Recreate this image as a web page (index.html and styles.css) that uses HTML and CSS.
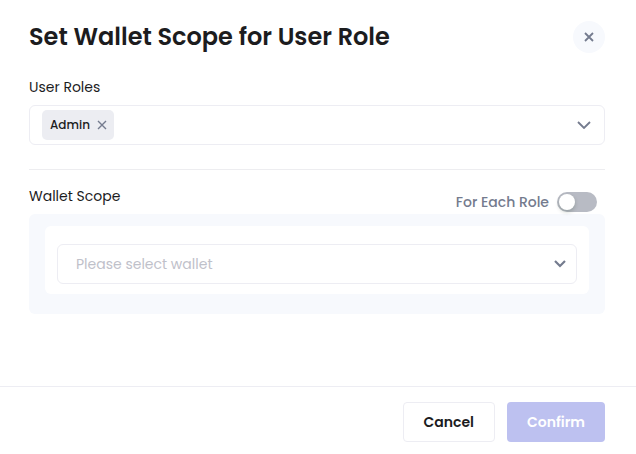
FILE: index.html
```html
<!DOCTYPE html>
<html lang="en">
<head>
<meta charset="utf-8">
<meta name="viewport" content="width=device-width, initial-scale=1">
<title>Set Wallet Scope for User Role</title>
<link rel="stylesheet" href="styles.css">
</head>
<body>
<form class="dialog" role="dialog" aria-labelledby="dialog-title">
  <header class="dialog-header">
    <h1 class="dialog-title" id="dialog-title">Set Wallet Scope for User Role</h1>
    <button class="close" type="button" aria-label="Close">
      <svg width="10" height="10" viewBox="0 0 10 10"><path d="M1 1L9 9M9 1L1 9" fill="none" stroke="currentColor" stroke-width="1.8"/></svg>
    </button>
  </header>

  <main class="dialog-body">
    <label class="label" for="roles">User Roles</label>
    <div class="roles-box">
      <span class="chip">Admin
        <button class="chip-remove" type="button" aria-label="Remove Admin">
          <svg width="10" height="10" viewBox="0 0 10 10"><path d="M1 1L9 9M9 1L1 9" fill="none" stroke="currentColor" stroke-width="1.4"/></svg>
        </button>
      </span>
      <input class="roles-input" id="roles" type="text" role="combobox" aria-expanded="false">
      <svg class="chevron" width="14" height="8" viewBox="0 0 14 8"><path d="M1 1L7 7L13 1" fill="none" stroke="currentColor" stroke-width="1.8"/></svg>
    </div>

    <section class="scope">
      <div class="scope-head">
        <label class="label" for="wallet">Wallet Scope</label>
        <label class="toggle">For Each Role
          <input class="switch" type="checkbox" role="switch">
        </label>
      </div>
      <div class="scope-panel">
        <div class="scope-card">
          <div class="select-wrap">
            <select class="select" id="wallet">
              <option>Please select wallet</option>
            </select>
            <svg class="select-arrow" width="12" height="8" viewBox="0 0 12 8"><path d="M1 1L6 6L11 1" fill="none" stroke="currentColor" stroke-width="2.2"/></svg>
          </div>
        </div>
      </div>
    </section>
  </main>

  <footer class="dialog-footer">
    <button class="button button-plain" type="button">Cancel</button>
    <button class="button button-primary" type="submit" disabled>Confirm</button>
  </footer>
</form>
</body>
</html>
```
FILE: styles.css
```css
* {
  box-sizing: border-box;
}

body {
  margin: 0;
  background: #fff;
  color: #1c1c1e;
  font: 400 14px/24px Poppins, Inter, "Liberation Sans", sans-serif;
}

button, input, select {
  font: inherit;
  color: inherit;
}

button {
  border: 0;
  padding: 0;
}

svg {
  display: block;
  flex: none;
}

.dialog {
  display: flex;
  flex-direction: column;
  min-height: 100vh;
}

.dialog-header {
  display: flex;
  align-items: center;
  justify-content: space-between;
  padding: 21px 31px 22px 29px;
}

.dialog-title {
  margin: 0;
  font-size: 24px;
  font-weight: 600;
  line-height: 32px;
}

.close {
  display: grid;
  place-items: center;
  width: 32px;
  height: 32px;
  border-radius: 50%;
  background: #f7f9fd;
  color: #747b8e;
}

.dialog-body {
  flex: 1;
  padding: 0 31px 24px 29px;
}

.label {
  display: block;
}

.roles-box {
  display: flex;
  align-items: center;
  height: 40px;
  margin-top: 6px;
  padding: 0 13px 0 12px;
  border: 1px solid #ededf3;
  border-radius: 6px;
}

.chip {
  display: flex;
  align-items: center;
  gap: 7px;
  height: 30px;
  padding: 0 7px 0 8px;
  border-radius: 5px;
  background: #ecedf2;
  font-size: 12px;
  font-weight: 500;
}

.chip-remove {
  background: none;
  color: #747b8e;
}

.roles-input {
  flex: 1;
  min-width: 0;
  border: 0;
  outline: 0;
  background: none;
}

.chevron {
  color: #747b8e;
}

.scope {
  margin-top: 24px;
  border-top: 1px solid #ededf0;
}

.scope-head {
  display: flex;
  justify-content: space-between;
  padding: 14px 8px 0 0;
}

.toggle {
  display: flex;
  align-items: center;
  gap: 8px;
  margin-top: 6px;
  color: #747b8e;
  font-weight: 500;
}

.switch {
  appearance: none;
  display: flex;
  width: 40px;
  height: 20px;
  margin: 0;
  padding: 2px;
  border-radius: 10px;
  background: #b8bbc4;
}

.switch::before {
  content: "";
  width: 16px;
  height: 16px;
  border-radius: 50%;
  background: #fff;
  box-shadow: 0 2px 4px rgba(0, 35, 11, 0.2);
}

.switch:checked {
  justify-content: flex-end;
  background: #5b62d9;
}

.scope-panel {
  padding: 12px 16px 20px;
  border-radius: 6px;
  background: #f7f9fd;
}

.scope-card {
  padding: 18px 12px 10px;
  border-radius: 6px;
  background: #fff;
}

.select-wrap {
  display: grid;
  align-items: center;
}

.select,
.select-arrow {
  grid-area: 1 / 1;
}

.select {
  appearance: none;
  width: 100%;
  height: 40px;
  padding: 0 40px 0 18px;
  border: 1px solid #ededf3;
  border-radius: 6px;
  background: #fff;
  color: #bfc1ca;
}

.select-arrow {
  justify-self: end;
  margin-right: 11px;
  color: #747b8e;
  pointer-events: none;
}

.dialog-footer {
  display: flex;
  justify-content: flex-end;
  gap: 12px;
  padding: 15px 31px 12px 29px;
  border-top: 1px solid #ededf3;
}

.button {
  height: 40px;
  padding: 0 20px;
  border-radius: 4px;
  font-weight: 600;
}

.button-plain {
  border: 1px solid #ededf3;
  background: #fff;
}

.button-primary {
  background: #bdc1f0;
  color: #fff;
}
```
